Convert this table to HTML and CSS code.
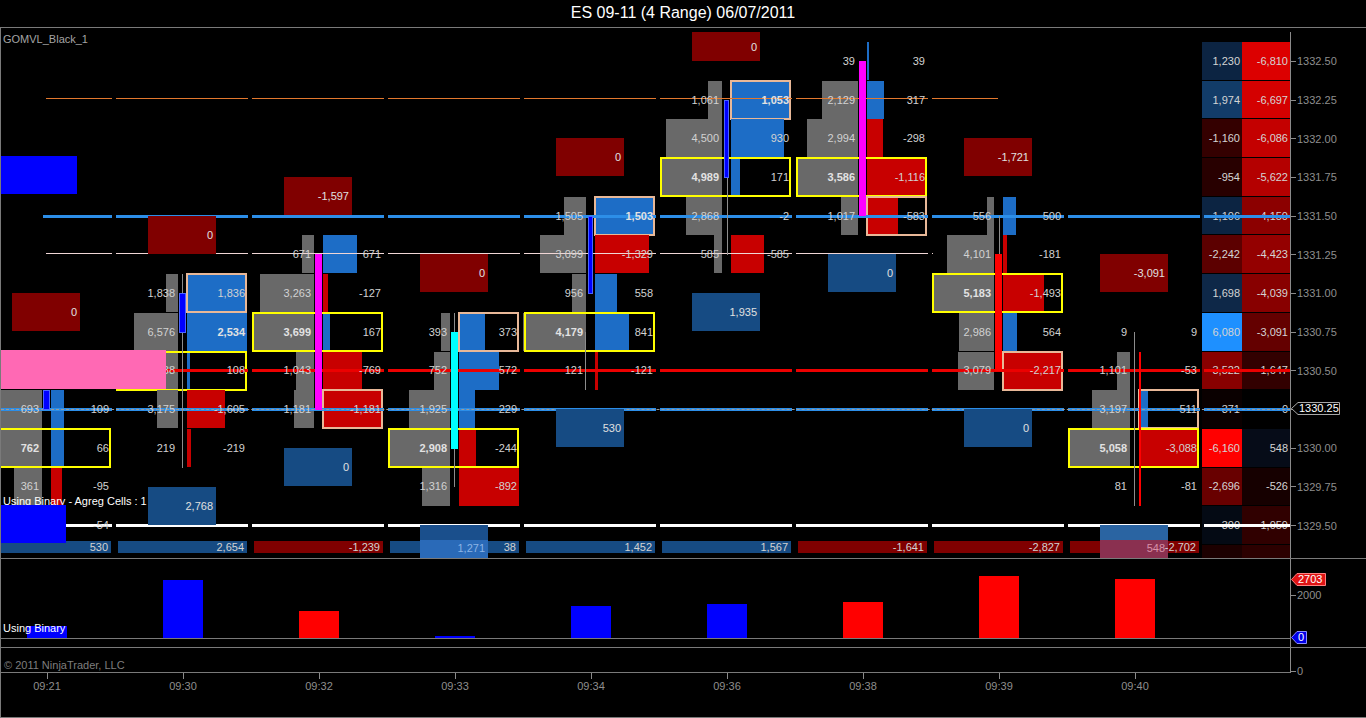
FILE: index.html
```html
<!DOCTYPE html>
<html>
<head>
<meta charset="utf-8">
<title>ES 09-11 (4 Range) 06/07/2011</title>
<link rel="stylesheet" href="styles.css">
</head>
<body>
<header class="title">ES 09-11 (4 Range) 06/07/2011</header>
<div class="frame">
  <section class="price">
    <div class="plot">
      <div class="cols">
        <!-- 09:21 -->
        <div class="col">
          <div class="ov ov-top k3"></div>
          <div class="fl fr k6">0</div>
          <div class="cg k9" style="width:42px"></div>
          <div class="cb k9" style="width:13px"></div>
          <div class="cg k10" style="width:42px"></div>
          <div class="cb k10" style="width:13px"></div>
          <div class="cg k11" style="width:28px"></div>
          <div class="cr k11" style="width:11px"></div>
          <div class="ybox k10"></div>
          <div class="body bl mb" style="grid-row:11 / 12"></div>
          <span class="tl k9">693</span><span class="tr k9">109</span>
          <span class="tl bold k10">762</span><span class="tr k10">66</span>
          <span class="tl k11">361</span><span class="tr k11">-95</span>
          <span class="tr k12">-54</span>
          <div class="ov pink k8"></div>
          <div class="ov ov-bot k12"></div>
          <div class="sum sb k13"></div><span class="st k13">530</span>
        </div>
        <!-- 09:30 -->
        <div class="col">
          <div class="fl fr k4">0</div>
          <div class="cg k6" style="width:12px"></div>
          <div class="cb k6" style="width:60px"></div>
          <div class="pbox k6"></div>
          <div class="cg k7" style="width:44px"></div>
          <div class="cb k7" style="width:60px"></div>
          <div class="cg k8" style="width:12px"></div>
          <div class="cb k8" style="width:3px"></div>
          <div class="ybox k8"></div>
          <div class="cg k9" style="width:21px"></div>
          <div class="cr k9" style="width:38px"></div>
          <div class="cr k10" style="width:4px"></div>
          <div class="wick" style="grid-row:8 / 13"></div>
          <div class="body bl mt mb" style="grid-row:8 / 10"></div>
          <span class="tl k6">1,838</span><span class="tr k6">1,836</span>
          <span class="tl k7">6,576</span><span class="tr bold k7">2,534</span>
          <span class="tl k8">1,238</span><span class="tr k8">108</span>
          <span class="tl k9">3,175</span><span class="tr k9">-1,605</span>
          <span class="tl k10">219</span><span class="tr k10">-219</span>
          <div class="fl fbl k11">2,768</div>
          <div class="sum sb k13"></div><span class="st k13">2,654</span>
        </div>
        <!-- 09:32 -->
        <div class="col">
          <div class="fl fr k3">-1,597</div>
          <div class="cg k5" style="width:12px"></div>
          <div class="cb k5" style="width:34px"></div>
          <div class="cg k6" style="width:54px"></div>
          <div class="cr k6" style="width:5px"></div>
          <div class="cg k7" style="width:62px"></div>
          <div class="cb k7" style="width:7px"></div>
          <div class="ybox k7"></div>
          <div class="cg k8" style="width:18px"></div>
          <div class="cr k8" style="width:39px"></div>
          <div class="cg k9" style="width:20px"></div>
          <div class="cr k9" style="width:60px"></div>
          <div class="pbox k9"></div>
          <div class="body mg mt mb" style="grid-row:7 / 12"></div>
          <span class="tl k5">671</span><span class="tr k5">671</span>
          <span class="tl k6">3,263</span><span class="tr k6">-127</span>
          <span class="tl bold k7">3,699</span><span class="tr k7">167</span>
          <span class="tl k8">1,043</span><span class="tr k8">-769</span>
          <span class="tl k9">1,181</span><span class="tr k9">-1,181</span>
          <div class="fl fbl k10">0</div>
          <div class="sum sr k13"></div><span class="st k13">-1,239</span>
        </div>
        <!-- 09:33 -->
        <div class="col">
          <div class="fl fr k5">0</div>
          <div class="cg k7" style="width:9px"></div>
          <div class="cb k7" style="width:26px"></div>
          <div class="pbox k7"></div>
          <div class="cg k8" style="width:16px"></div>
          <div class="cb k8" style="width:40px"></div>
          <div class="cg k9" style="width:41px"></div>
          <div class="cb k9" style="width:16px"></div>
          <div class="cg k10" style="width:62px"></div>
          <div class="cr k10" style="width:17px"></div>
          <div class="ybox k10"></div>
          <div class="cg k11" style="width:28px"></div>
          <div class="cr k11" style="width:60px"></div>
          <div class="wick mb" style="grid-row:9 / 14"></div>
          <div class="body cy mt mb" style="grid-row:9 / 13"></div>
          <span class="tl k7">393</span><span class="tr k7">373</span>
          <span class="tl k8">752</span><span class="tr k8">572</span>
          <span class="tl k9">1,925</span><span class="tr k9">229</span>
          <span class="tl bold k10">2,908</span><span class="tr k10">-244</span>
          <span class="tl k11">1,316</span><span class="tr k11">-892</span>
          <div class="sum sb k13"></div><span class="st k13">38</span>
          <div class="fl fbl fx-blue k12">1,271</div>
        </div>
        <!-- 09:34 -->
        <div class="col">
          <div class="fl fr k2">0</div>
          <div class="cg k4" style="width:22px"></div>
          <div class="cb k4" style="width:60px"></div>
          <div class="pbox k4"></div>
          <div class="cg k5" style="width:46px"></div>
          <div class="cr k5" style="width:54px"></div>
          <div class="cg k6" style="width:14px"></div>
          <div class="cb k6" style="width:22px"></div>
          <div class="cg k7" style="width:63px"></div>
          <div class="cb k7" style="width:34px"></div>
          <div class="ybox k7"></div>
          <div class="cr k8" style="width:3px"></div>
          <div class="wick wk-l mt" style="grid-row:9 / 11"></div>
          <div class="body bl thin mt mb" style="grid-row:6 / 9"></div>
          <span class="tl k4">1,505</span><span class="tr bold k4">1,503</span>
          <span class="tl k5">3,099</span><span class="tr k5">-1,329</span>
          <span class="tl k6">956</span><span class="tr k6">558</span>
          <span class="tl bold k7">4,179</span><span class="tr k7">841</span>
          <span class="tl k8">121</span><span class="tr k8">-121</span>
          <div class="fl fbl k9">530</div>
          <div class="sum sb k13"></div><span class="st k13">1,452</span>
        </div>
        <!-- 09:36 -->
        <div class="col">
          <div class="fl fr ftop">0</div>
          <div class="cg k1" style="width:14px"></div>
          <div class="cb k1" style="width:60px"></div>
          <div class="pbox k1"></div>
          <div class="cg k2" style="width:56px"></div>
          <div class="cb k2" style="width:53px"></div>
          <div class="cg k3" style="width:62px"></div>
          <div class="cb k3" style="width:9px"></div>
          <div class="ybox k3"></div>
          <div class="cg k4" style="width:36px"></div>
          <div class="cg k5" style="width:8px"></div>
          <div class="cr k5" style="width:33px"></div>
          <div class="wick wk-r mt mb" style="grid-row:5 / 8"></div>
          <div class="body bl thin mt mb" style="grid-row:3 / 6"></div>
          <span class="tl k1">1,061</span><span class="tr bold k1">1,053</span>
          <span class="tl k2">4,500</span><span class="tr k2">930</span>
          <span class="tl bold k3">4,989</span><span class="tr k3">171</span>
          <span class="tl k4">2,868</span><span class="tr k4">-2</span>
          <span class="tl k5">585</span><span class="tr k5">-585</span>
          <div class="fl fbl k6">1,935</div>
          <div class="sum sb k13"></div><span class="st k13">1,567</span>
        </div>
        <!-- 09:38 -->
        <div class="col">
          <div class="cb k0" style="width:2px"></div>
          <div class="cg k1" style="width:36px"></div>
          <div class="cb k1" style="width:17px"></div>
          <div class="cg k2" style="width:51px"></div>
          <div class="cr k2" style="width:16px"></div>
          <div class="cg k3" style="width:62px"></div>
          <div class="cr k3" style="width:60px"></div>
          <div class="ybox k3"></div>
          <div class="cg k4" style="width:17px"></div>
          <div class="cr k4" style="width:31px"></div>
          <div class="pbox k4"></div>
          <div class="body mg mt mb" style="grid-row:2 / 7"></div>
          <span class="tl k0">39</span><span class="tr k0">39</span>
          <span class="tl k1">2,129</span><span class="tr k1">317</span>
          <span class="tl k2">2,994</span><span class="tr k2">-298</span>
          <span class="tl bold k3">3,586</span><span class="tr k3">-1,116</span>
          <span class="tl k4">1,017</span><span class="tr k4">-583</span>
          <div class="fl fbl k5">0</div>
          <div class="sum sr k13"></div><span class="st k13">-1,641</span>
        </div>
        <!-- 09:39 -->
        <div class="col">
          <div class="fl fr k2">-1,721</div>
          <div class="cg k4" style="width:7px"></div>
          <div class="cb k4" style="width:13px"></div>
          <div class="cg k5" style="width:47px"></div>
          <div class="cr k5" style="width:4px"></div>
          <div class="cg k6" style="width:61px"></div>
          <div class="cr k6" style="width:41px"></div>
          <div class="ybox k6"></div>
          <div class="cg k7" style="width:35px"></div>
          <div class="cb k7" style="width:14px"></div>
          <div class="cg k8" style="width:36px"></div>
          <div class="cr k8" style="width:60px"></div>
          <div class="pbox k8"></div>
          <div class="wick wk-r mt mb" style="grid-row:6 / 11"></div>
          <div class="body rd mt mb" style="grid-row:7 / 11"></div>
          <span class="tl k4">556</span><span class="tr k4">500</span>
          <span class="tl k5">4,101</span><span class="tr k5">-181</span>
          <span class="tl bold k6">5,183</span><span class="tr k6">-1,493</span>
          <span class="tl k7">2,986</span><span class="tr k7">564</span>
          <span class="tl k8">3,079</span><span class="tr k8">-2,217</span>
          <div class="fl fbl k9">0</div>
          <div class="sum sr k13"></div><span class="st k13">-2,827</span>
        </div>
        <!-- 09:40 -->
        <div class="col">
          <div class="fl fr k5">-3,091</div>
          <div class="cg k8" style="width:13px"></div>
          <div class="cg k9" style="width:38px"></div>
          <div class="cb k9" style="width:9px"></div>
          <div class="pbox k9"></div>
          <div class="cg k10" style="width:61px"></div>
          <div class="cr k10" style="width:60px"></div>
          <div class="ybox k10"></div>
          <div class="wick mt" style="grid-row:9 / 14"></div>
          <div class="body rd hair" style="grid-row:10 / 14"></div>
          <span class="tl k7">9</span><span class="tr k7">9</span>
          <span class="tl k8">1,101</span><span class="tr k8">-53</span>
          <span class="tl k9">3,197</span><span class="tr k9">511</span>
          <span class="tl bold k10">5,058</span><span class="tr k10">-3,088</span>
          <span class="tl k11">81</span><span class="tr k11">-81</span>
          <div class="sum sr k13"></div><span class="st k13">-2,702</span>
          <div class="fl fbl fx-red k12">548</div>
        </div>
      </div>

      <div class="ladder">
        <div style="background:#0c2442">1,230</div><div style="background:#dc0000">-6,810</div>
        <div style="background:#123c68">1,974</div><div style="background:#d40000">-6,697</div>
        <div style="background:#340000">-1,160</div><div style="background:#c40000">-6,086</div>
        <div style="background:#280000">-954</div><div style="background:#b40000">-5,622</div>
        <div style="background:#0c2442">1,106</div><div style="background:#8c0000">-4,150</div>
        <div style="background:#5c0000">-2,242</div><div style="background:#940000">-4,423</div>
        <div style="background:#0e2848">1,698</div><div style="background:#880000">-4,039</div>
        <div style="background:#1e90ff">6,080</div><div style="background:#640000">-3,091</div>
        <div style="background:#880000">-3,522</div><div style="background:#320000">-1,647</div>
        <div style="background:#0a0000">-371</div><div style="background:#000000">0</div>
        <div style="background:#ff0000">-6,160</div><div style="background:#060c18">548</div>
        <div style="background:#680000">-2,696</div><div style="background:#160000">-526</div>
        <div style="background:#040a14">300</div><div style="background:#300000">-1,059</div>
        <div style="background:#1c0000"></div><div style="background:#2c0000"></div>
      </div>

      <div class="ln l-orange"></div>
      <div class="ln l-blue"></div>
      <div class="ln l-pink"></div>
      <div class="ln l-red"></div>
      <div class="ln l-dot"></div>
      <div class="ln l-white"></div>

      <span class="lbl lbl-gom">GOMVL_Black_1</span>
      <span class="lbl lbl-agreg">Using Binary - Agreg Cells : 1</span>
    </div>

    <div class="axis">
      <div class="pl">1332.50</div>
      <div class="pl">1332.25</div>
      <div class="pl">1332.00</div>
      <div class="pl">1331.75</div>
      <div class="pl">1331.50</div>
      <div class="pl">1331.25</div>
      <div class="pl">1331.00</div>
      <div class="pl">1330.75</div>
      <div class="pl">1330.50</div>
      <div class="pl"></div>
      <div class="pl">1330.00</div>
      <div class="pl">1329.75</div>
      <div class="pl">1329.50</div>
      <div class="tag tag-price">
        <svg width="50" height="13" viewBox="0 0 50 13"><path d="M0.5 6.5 L7 0.5 H48.5 V12.5 H7 Z" fill="#000" stroke="#a8a8a8"/></svg>
        <span>1330.25</span>
      </div>
    </div>
  </section>

  <section class="ind">
    <div class="ind-plot">
      <div class="bars">
        <div class="bcol"><div class="bar blu" style="height:12px"></div></div>
        <div class="bcol"><div class="bar blu" style="height:58px"></div></div>
        <div class="bcol"><div class="bar red" style="height:27px"></div></div>
        <div class="bcol"><div class="bar blu" style="height:2px"></div></div>
        <div class="bcol"><div class="bar blu" style="height:32px"></div></div>
        <div class="bcol"><div class="bar blu" style="height:34px"></div></div>
        <div class="bcol"><div class="bar red" style="height:36px"></div></div>
        <div class="bcol"><div class="bar red" style="height:62px"></div></div>
        <div class="bcol"><div class="bar red" style="height:59px"></div></div>
      </div>
      <span class="lbl lbl-bin">Using Binary</span>
    </div>
    <div class="ind-axis">
      <div class="tag tag-max">
        <svg width="36" height="13" viewBox="0 0 36 13"><path d="M0.5 6.5 L6 0.5 H34.5 V12.5 H6 Z" fill="#e01414" stroke="#ff8080"/></svg>
        <span>2703</span>
      </div>
      <div class="al al-2000">2000</div>
      <div class="tag tag-zero">
        <svg width="17" height="13" viewBox="0 0 17 13"><path d="M0.5 6.5 L6 0.5 H15.5 V12.5 H6 Z" fill="#0000e6" stroke="#8c8cff"/></svg>
        <span>0</span>
      </div>
    </div>
  </section>

  <section class="copy">
    <div class="copy-plot">© 2011 NinjaTrader, LLC</div>
    <div class="copy-axis"><div class="al al-0">0</div></div>
  </section>

  <section class="time">
    <div class="tcol">09:21</div>
    <div class="tcol">09:30</div>
    <div class="tcol">09:32</div>
    <div class="tcol">09:33</div>
    <div class="tcol">09:34</div>
    <div class="tcol">09:36</div>
    <div class="tcol">09:38</div>
    <div class="tcol">09:39</div>
    <div class="tcol">09:40</div>
  </section>
</div>
</body>
</html>
```

FILE: styles.css
```css
* { box-sizing: border-box; margin: 0; padding: 0; }
html, body { background: #000; }
body {
  width: 1366px;
  height: 718px;
  overflow: hidden;
  font-family: "Liberation Sans", Arial, sans-serif;
  font-size: 11px;
  color: #d2d2d2;
}

.title {
  height: 27px;
  display: flex;
  align-items: center;
  justify-content: center;
  color: #fff;
  font-size: 16px;
  padding-bottom: 1px;
}

.frame {
  height: 691px;
  border-top: 1px solid #7a7a7a;
  border-left: 1px solid #7a7a7a;
  border-bottom: 1px solid #7a7a7a;
  display: flex;
  flex-direction: column;
}

/* ---------- price panel ---------- */
.price {
  height: 531px;
  flex: none;
  padding-top: 4px;
  border-bottom: 1px solid #7a7a7a;
  display: flex;
}
.plot {
  position: relative;
  z-index: 0;
  width: 1289px;
  flex: none;
  overflow: hidden;
  display: flex;
}
.cols { display: flex; flex: none; width: 1201px; }
.col {
  flex: none;
  width: 136px;
  display: grid;
  grid-template-columns: 136px;
  grid-template-rows: 10px repeat(14, 38.7px);
}
.col:first-child { margin-left: -22px; }
.col > * { grid-column: 1; }

.k0 { grid-row-start: 2; }  .k1 { grid-row-start: 3; }  .k2 { grid-row-start: 4; }
.k3 { grid-row-start: 5; }  .k4 { grid-row-start: 6; }  .k5 { grid-row-start: 7; }
.k6 { grid-row-start: 8; }  .k7 { grid-row-start: 9; }  .k8 { grid-row-start: 10; }
.k9 { grid-row-start: 11; } .k10 { grid-row-start: 12; } .k11 { grid-row-start: 13; }
.k12 { grid-row-start: 14; } .k13 { grid-row-start: 15; }

.cg, .cb, .cr { align-self: start; height: 38px; z-index: 1; }
.cg { justify-self: end; margin-right: 73px; background: #696969; }
.cb, .cr { justify-self: start; margin-left: 72px; }
.cb { background: #1d6dc6; }
.cr { background: #c80000; }

.ybox, .pbox {
  justify-self: start;
  align-self: start;
  height: 40px;
  margin-top: -1px;
  border: 2px solid;
  z-index: 1;
}
.ybox { margin-left: 1px; width: 131px; border-color: #ffff00; }
.pbox { margin-left: 71px; width: 61px; border-color: #e8b898; }

.tl, .tr {
  justify-self: end;
  align-self: center;
  line-height: 13px;
  white-space: nowrap;
  z-index: 3;
}
.tl { margin-right: 76px; }
.tr { margin-right: 6px; }
.bold { font-weight: bold; color: #e2e2e2; }

.body {
  justify-self: start;
  align-self: stretch;
  margin-left: 64px;
  width: 7px;
  z-index: 3;
}
.body.thin { margin-left: 65px; width: 5px; }
.body.hair { margin-left: 72px; width: 2px; }
.bl { background: #0000ff; border: 1px solid #4a64ff; }
.mg { background: #ff00ff; }
.cy { background: #00ffff; }
.rd { background: #ff0000; }
.mt { margin-top: 19px; }
.mb { margin-bottom: 19px; }

.wick {
  justify-self: start;
  align-self: stretch;
  margin-left: 67px;
  width: 1px;
  background: #8c8c8c;
  z-index: 3;
}
.wick.wk-l { margin-left: 62px; }
.wick.wk-r { margin-left: 68px; }

.fl {
  justify-self: start;
  align-self: start;
  margin-left: 33px;
  margin-top: 19px;
  width: 68px;
  height: 38px;
  padding-right: 3px;
  display: flex;
  align-items: center;
  justify-content: flex-end;
  color: #e0e0e0;
  z-index: 4;
}
.fr { background: #800000; }
.fbl { background: #164b83; }
.ftop { grid-row-start: 1; margin-top: 0; height: 29px; grid-row-end: span 2; }
.fx-blue { background: linear-gradient(#1a4f8c 0 15px, #2a6ab8 15px); color: #8cb4e6; padding-top: 7px; }
.fx-red { background: linear-gradient(#2a64a2 0 15px, #8a3050 15px); color: #d890a8; padding-top: 7px; }

.sum {
  justify-self: start;
  align-self: start;
  margin-left: 3px;
  margin-top: -4px;
  width: 129px;
  height: 12px;
  z-index: 3;
}
.sb { background: #164b83; }
.sr { background: #800000; }
.st {
  justify-self: end;
  align-self: start;
  margin-right: 7px;
  margin-top: -4px;
  line-height: 12px;
  white-space: nowrap;
  z-index: 5;
}

.ov { justify-self: start; align-self: start; margin-left: 21px; height: 38px; z-index: 5; }
.ov-top { background: #0000ff; width: 77px; margin-top: -2px; }
.ov-bot { background: #0000ff; width: 66px; margin-top: -1px; }
.pink { background: #ff69b4; width: 166px; height: 39px; margin-top: -2px; }

/* ladder */
.ladder {
  flex: none;
  width: 88px;
  display: grid;
  grid-template-columns: 40px 48px;
  grid-auto-rows: 37.7px;
  row-gap: 1px;
  padding-top: 10px;
  align-content: start;
}
.ladder > div {
  display: flex;
  align-items: center;
  justify-content: flex-end;
  padding-right: 2px;
  color: #d4d4d4;
}

/* level lines */
.ln {
  position: absolute;
  left: 0;
  right: 0;
  z-index: 2;
  background: repeating-linear-gradient(90deg, var(--c) 0 132px, transparent 132px 136px);
  background-position: -21px 0;
}
.l-orange { top: 66px; height: 1px; --c: #e2782e; clip-path: inset(0 292px 0 45px); }
.l-blue { top: 183px; height: 3px; --c: #2c8ee8; clip-path: inset(0 0 0 42px); }
.l-pink { top: 221px; height: 1px; --c: #f0d6d6; clip-path: inset(0 357px 0 45px); }
.l-red { top: 337px; height: 3px; --c: #ec0000; }
.l-dot { top: 376px; height: 3px; --c: #2c8ee8; }
.l-dot::after {
  content: "";
  position: absolute;
  left: 0;
  right: 0;
  top: 1px;
  border-top: 1px dashed #9a9a9a;
}
.l-white { top: 492px; height: 3px; --c: #ffffff; clip-path: inset(0 0 0 65px); }

.lbl { position: absolute; left: 2px; line-height: 12px; white-space: nowrap; z-index: 3; }
.lbl-gom { top: 1px; color: #a4a4a4; }
.lbl-agreg { top: 463px; color: #fff; }
.lbl-bin { top: 63px; color: #fff; }

/* price axis */
.axis {
  flex: 1;
  position: relative;
  border-left: 1px solid #8a8a8a;
  padding-top: 10px;
}
.pl {
  height: 38.7px;
  display: flex;
  align-items: center;
  color: #8e8e8e;
}
.pl::before {
  content: "";
  width: 5px;
  height: 1px;
  background: #8a8a8a;
  margin-right: 1px;
}
.tag { position: absolute; left: 0; height: 13px; }
.tag svg { position: absolute; left: 0; top: 0; }
.tag span { position: absolute; left: 7px; top: 0; line-height: 13px; color: #fff; }
.tag-price { top: 370px; width: 50px; }
.tag-price span { left: 8px; }
.tag-max { top: 14px; width: 36px; }
.tag-zero { top: 72px; width: 17px; }

/* indicator panel */
.ind {
  height: 89px;
  flex: none;
  border-bottom: 1px solid #7a7a7a;
  display: flex;
}
.ind-plot {
  position: relative;
  width: 1289px;
  flex: none;
  height: 80px;
  border-bottom: 1px solid #7a7a7a;
  overflow: hidden;
}
.bars { display: flex; height: 79px; margin-left: -22px; }
.bcol {
  flex: none;
  width: 136px;
  display: flex;
  justify-content: center;
  align-items: flex-end;
}
.bar { width: 40px; }
.bar.blu { background: #0000ff; }
.bar.red { background: #ff0000; }
.ind-axis { flex: 1; position: relative; border-left: 1px solid #8a8a8a; }
.al {
  position: absolute;
  left: 0;
  height: 12px;
  display: flex;
  align-items: center;
  color: #8e8e8e;
}
.al::before {
  content: "";
  width: 5px;
  height: 1px;
  background: #8a8a8a;
  margin-right: 1px;
}
.al-2000 { top: 30px; }

/* copyright panel */
.copy { height: 25px; flex: none; display: flex; }
.copy-plot {
  width: 1289px;
  flex: none;
  border-bottom: 1px solid #7a7a7a;
  padding: 11px 0 0 3px;
  line-height: 12px;
  color: #7e7e7e;
}
.copy-axis { flex: 1; position: relative; border-left: 1px solid #8a8a8a; }
.al-0 { top: 17px; }

/* time axis */
.time { height: 44px; flex: none; display: flex; margin-left: -22px; }
.tcol {
  flex: none;
  width: 136px;
  display: flex;
  flex-direction: column;
  align-items: center;
  line-height: 12px;
  color: #8e8e8e;
}
.tcol::before {
  content: "";
  width: 1px;
  height: 6px;
  background: #8a8a8a;
  margin-bottom: 1px;
}
```
